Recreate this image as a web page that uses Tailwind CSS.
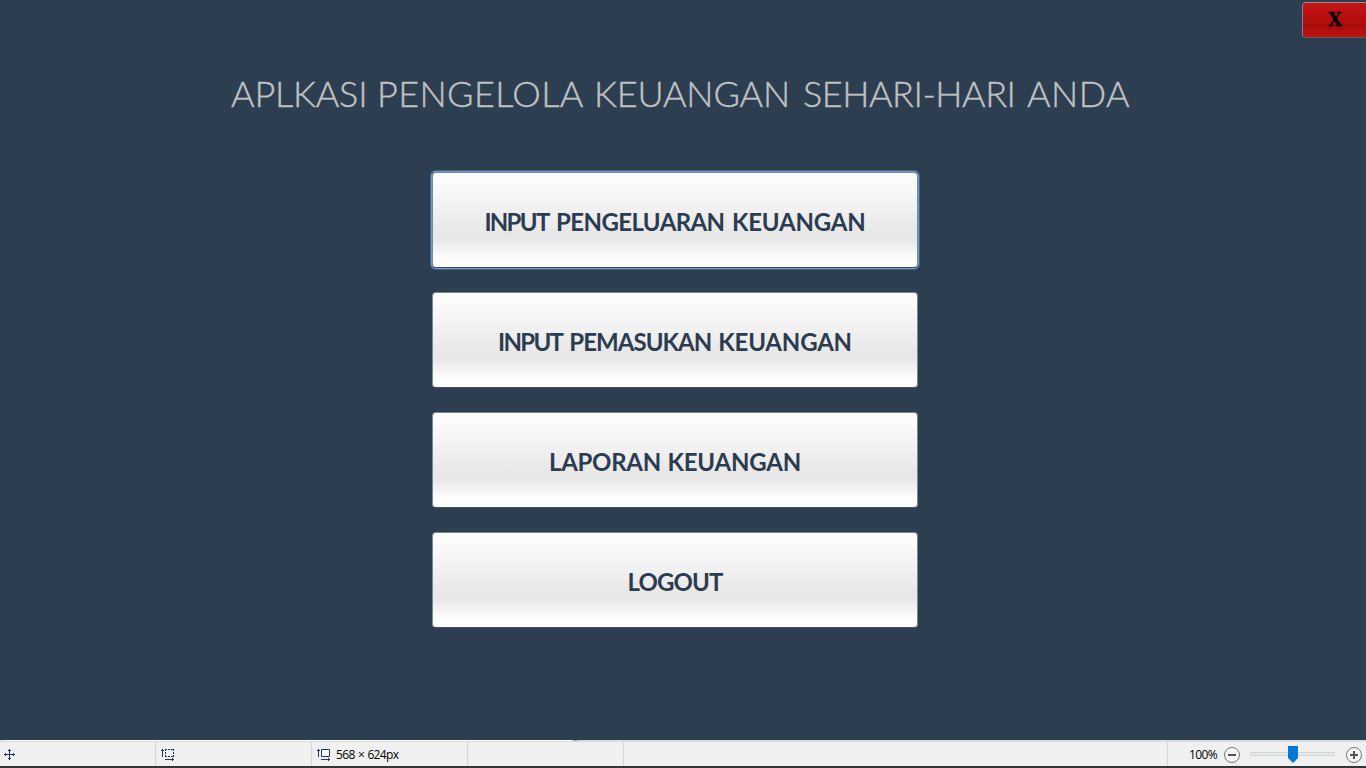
<!DOCTYPE html>
<html lang="id"><head><meta charset="utf-8"><title>Aplikasi Keuangan</title>
<script src="https://cdn.jsdelivr.net/npm/@tailwindcss/browser@4"></script></head>
<body class="relative flex h-[768px] w-[1366px] flex-col overflow-hidden bg-[#2d3e50]">
<button class="absolute top-[2px] left-[1302px] h-9 w-[66px] rounded-[4px] border border-t-[#9b8d91] border-l-[#858087] border-b-[#5a5a60] bg-linear-to-b from-[#c81414] via-[#a90c0c] via-70% to-[#c41212] pb-px text-center font-['DejaVu_Serif',serif] text-[18px] leading-[30px] font-bold text-black [-webkit-text-stroke:0.3px_black]">X</button>
<main class="flex h-[740px] shrink-0 flex-col">
<h1 class="mt-[68px] ml-[231px] flex h-[50px] font-['Lato',sans-serif] text-[36px] leading-[50px] font-light whitespace-nowrap text-[#c0c2c4] [-webkit-text-stroke:0.4px_#c0c2c4]">
<span class="w-[146px] tracking-[-0.2px]">APLKASI</span><span class="w-[217px] tracking-[0.4px]">PENGELOLA</span><span class="w-[209px] tracking-[-0.15px]">KEUANGAN</span><span class="w-[224px] tracking-[-0.45px]">SEHARI-HARI</span><span class="tracking-[0.5px]">ANDA</span></h1>
<nav class="mt-[54px] ml-[432px] flex w-[486px] flex-col gap-6 font-['Lato',sans-serif] text-[24px] font-bold whitespace-nowrap text-[#2c3c50]">
<button class="flex h-24 items-center justify-center gap-[7.500px] rounded-[4px] border border-[#7d8791] border-b-[#4b5159] bg-linear-to-b from-white via-[#e6e6e6] via-68% to-white to-93% pt-[3px] shadow-[0_0_0_1px_#6a9ccb,0_0_0_2px_#41638a]"><span class="tracking-[-1.7px]">INPUT</span><span class="tracking-[-0.6px]">PENGELUARAN</span><span class="tracking-[-0.2px]">KEUANGAN</span></button>
<button class="flex h-24 items-center justify-center gap-[7px] rounded-[4px] border border-[#7d8791] border-b-[#4b5159] bg-linear-to-b from-white via-[#e6e6e6] via-68% to-white to-93% pt-[3px]"><span class="tracking-[-1.7px]">INPUT</span><span class="tracking-[-0.95px]">PEMASUKAN</span><span class="tracking-[-0.2px]">KEUANGAN</span></button>
<button class="flex h-24 items-center justify-center gap-[6.500px] rounded-[4px] border border-[#7d8791] border-b-[#4b5159] bg-linear-to-b from-white via-[#e6e6e6] via-68% to-white to-93% pt-[3px]"><span class="tracking-[-0.3px]">LAPORAN</span><span class="tracking-[-0.2px]">KEUANGAN</span></button>
<button class="h-24 rounded-[4px] border border-[#7d8791] border-b-[#4b5159] bg-linear-to-b from-white via-[#e6e6e6] via-68% to-white to-93% pt-[3px] tracking-[-0.9px]">LOGOUT</button>
</nav></main>
<footer class="h-7 shrink-0 border-b-2 border-[#353535] bg-[#f0f0f0] font-['Open_Sans',sans-serif] text-[12px] text-black">
<div class="flex h-px"><i class="w-[5px] bg-[#d2deee]"></i><i class="w-[568px] bg-white"></i><i class="w-2 bg-linear-to-r from-[#8795aa] to-[#d2dcec]"></i><i class="flex-1 bg-[#d4dcea]"></i></div>
<div class="h-px bg-[#dcdcdc]"></div>
<div class="flex h-6 items-center">
<div class="flex h-full w-[156px] items-center border-r border-[#d5d5d5] pl-1"><svg width="11" height="11" viewBox="0 0 11 11" fill="none" stroke="#20395d"><path d="M5.5 0v11M0 5.5h11M4 1.5h3M4 9.5h3M1.500 4v3M9.500 4v3"/></svg></div>
<div class="flex h-full w-[156px] items-center border-r border-[#d5d5d5] pl-[5px]"><svg width="13" height="13" viewBox="0 0 13 13" fill="none" stroke="#20395d"><path d="M1.500 1v8M0 2.500h3M4 11.500h9M11.500 10v3"/><path d="M4 1.500h9M4 8.500h9M4.500 1v8M12.500 1v8" stroke-dasharray="2 1"/></svg></div>
<div class="flex h-full w-[156px] items-center border-r border-[#d5d5d5] pl-[5px]"><svg width="13" height="13" viewBox="0 0 13 13" fill="none" stroke="#20395d"><path d="M1.500 1v8M0 2.500h3M4 11.500h9M11.500 10v3"/><path d="M4.500 1.500h8v7h-8z" fill="#f8fcff"/></svg><span class="ml-[6px] pt-[2px] tracking-[-0.65px] [word-spacing:0.8px]">568 × 624px</span></div>
<div class="h-full w-[156px] border-r border-[#d5d5d5]"></div>
<div class="h-full w-[544px] border-r border-[#d5d5d5]"></div>
<span class="ml-[21px] w-[34px] pt-[2px] tracking-[-0.6px]">100%</span>
<svg width="142" height="24" viewBox="0 0 142 24" fill="none"><g stroke="#777" fill="#f6f6f6"><circle cx="9" cy="13" r="7.500"/><circle cx="131" cy="13" r="7.500"/></g><path d="M5 13h8M127 13h8M131 9v8" stroke="#555" stroke-width="2"/><path d="M27.500 10.500h84v3h-84z" fill="#e7eaea" stroke="#d5d5d5"/><path d="M65 4h10v12l-5 5-5-5z" fill="#0078d7"/></svg>
</div></footer>
</body></html>
